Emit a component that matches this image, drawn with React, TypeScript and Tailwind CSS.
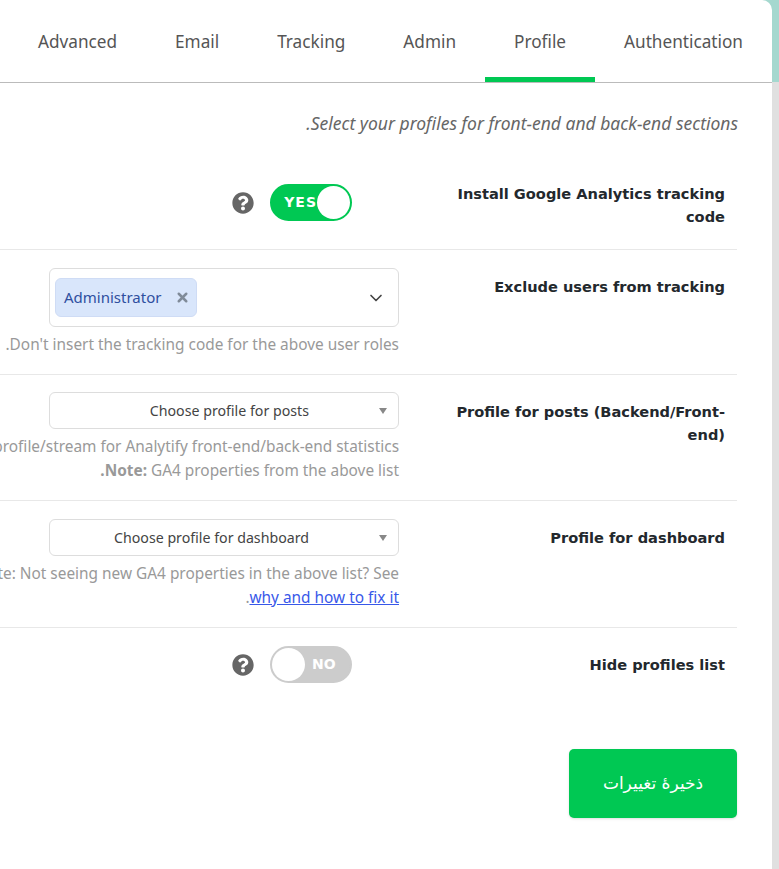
import { ChevronDown, X } from 'lucide-react'
import { FaQuestionCircle } from 'react-icons/fa'

const tabs = ['Authentication', 'Profile', 'Admin', 'Tracking', 'Email', 'Advanced']

function Toggle({ on }: { on: boolean }) {
  return (
    <div
      dir="ltr"
      className={
        'flex h-[37px] w-[82px] items-center rounded-full border-2 ' +
        (on ? 'justify-end border-[#00c853] bg-[#00c853]' : 'justify-start border-[#cccccc] bg-[#cccccc]')
      }
    >
      {on ? (
        <span className="text-[14px] font-bold tracking-[1px] text-white font-['DejaVu_Sans']">YES</span>
      ) : null}
      <span className="h-[33px] w-[33px] rounded-full bg-white" />
      {!on ? <span className="ml-[7px] text-[14px] font-bold text-white font-['DejaVu_Sans']">NO</span> : null}
    </div>
  )
}

function SwitchField({ on }: { on: boolean }) {
  return (
    <div className="flex items-center gap-[16px] pr-[47px]">
      <Toggle on={on} />
      <FaQuestionCircle className="h-[22px] w-[22px] text-[#666666]" />
    </div>
  )
}

function SelectBox({ label }: { label: string }) {
  return (
    <div className="flex h-[37px] w-[350px] items-center rounded-[6px] border border-[#dddddd] bg-white pr-[11px]">
      <svg width="8" height="6" viewBox="0 0 8 6" className="shrink-0">
        <path d="M0 0h8L4 6z" fill="#888888" />
      </svg>
      <span className="mr-[70px] text-[14.2px] text-[#444444]">{label}</span>
    </div>
  )
}

function Row({
  label,
  labelPad = 'pt-[25px]',
  children,
  last,
}: {
  label: React.ReactNode
  labelPad?: string
  children: React.ReactNode
  last?: boolean
}) {
  return (
    <div className={'flex ' + (last ? '' : 'border-b border-[#e8e8e8]')}>
      <div
        className={
          "w-[338px] shrink-0 pl-[46px] pr-[12px] text-[14.6px] leading-[23px] font-bold text-[#23282d] font-['DejaVu_Sans'] " +
          labelPad
        }
      >
        {label}
      </div>
      <div className="min-w-0 flex-1">{children}</div>
    </div>
  )
}

function Help({ children }: { children: React.ReactNode }) {
  return <div className="mt-[6px] whitespace-nowrap text-[15.4px] leading-[24px] text-[#999999]">{children}</div>
}

export default function App() {
  return (
    <div
      dir="rtl"
      className="h-[869px] w-[779px] overflow-hidden bg-[linear-gradient(#a5d8cf_82px,#e0e0e0_82px)] font-['Noto_Sans',sans-serif]"
    >
      <div className="mr-[7px] h-full rounded-tr-[10px] bg-white">
        {/* Tabs */}
        <div className="flex h-[83px] border-b border-[#bbbbbb]">
          {tabs.map((tab) => (
            <div
              key={tab}
              className={
                'flex items-center border-b-[5px] px-[29px] pt-[6px] text-[17.2px] text-[#555555] ' +
                (tab === 'Profile' ? 'border-[#00c853]' : 'border-transparent')
              }
            >
              {tab}
            </div>
          ))}
        </div>

        <div className="mr-[35px]">
          <p className="pt-[28px] pb-[35px] -mr-px text-[17.5px] leading-[24px] italic text-[#666666]">
            Select your profiles for front-end and back-end sections.
          </p>

          <Row label="Install Google Analytics tracking code" labelPad="pt-[12px]">
            <div className="h-[79px] pt-[14px]">
              <SwitchField on />
            </div>
          </Row>

          <Row label="Exclude users from tracking">
            <div className="h-[124px] pt-[18px]">
              <div
                dir="ltr"
                className="flex h-[59px] w-[350px] items-center justify-between rounded-[6px] border border-[#dddddd] pl-[5px] pr-[12px]"
              >
                <div className="flex h-[39px] w-[142px] items-center justify-between rounded-[6px] border border-[#cfdcf5] bg-[#d9e6fb] pl-[8px] pr-[6px] text-[15px] text-[#2f4f9f]">
                  <span>Administrator</span>
                  <X className="h-[15px] w-[15px] text-[#808b99]" strokeWidth={4} />
                </div>
                <ChevronDown className="h-[20px] w-[20px] text-[#444444]" strokeWidth={2} />
              </div>
              <Help>Don't insert the tracking code for the above user roles.</Help>
            </div>
          </Row>

          <Row label="Profile for posts (Backend/Front-end)">
            <div className="h-[125px] pt-[17px]">
              <SelectBox label="Choose profile for posts" />
              <Help>
                <span className="block">Select the profile/stream for Analytify front-end/back-end statistics</span>
                <span className="block">
                  <b>Note:</b> GA4 properties from the above list<b>.</b>
                </span>
              </Help>
            </div>
          </Row>

          <Row label="Profile for dashboard">
            <div className="h-[126px] pt-[18px]">
              <SelectBox label="Choose profile for dashboard" />
              <Help>
                <span className="block">Note: Not seeing new GA4 properties in the above list? See</span>
                <span className="block">
                  <a className="text-[#3858e9] underline">why and how to fix it</a>.
                </span>
              </Help>
            </div>
          </Row>

          <Row label="Hide profiles list" last>
            <div className="h-[121px] pt-[18px]">
              <SwitchField on={false} />
            </div>
          </Row>

          <button className="block h-[69px] w-[168px] rounded-[5px] bg-[#00c853] text-[17px] text-white shadow-sm font-['DejaVu_Sans']">
            ذخیرهٔ تغییرات
          </button>
        </div>
      </div>
    </div>
  )
}
